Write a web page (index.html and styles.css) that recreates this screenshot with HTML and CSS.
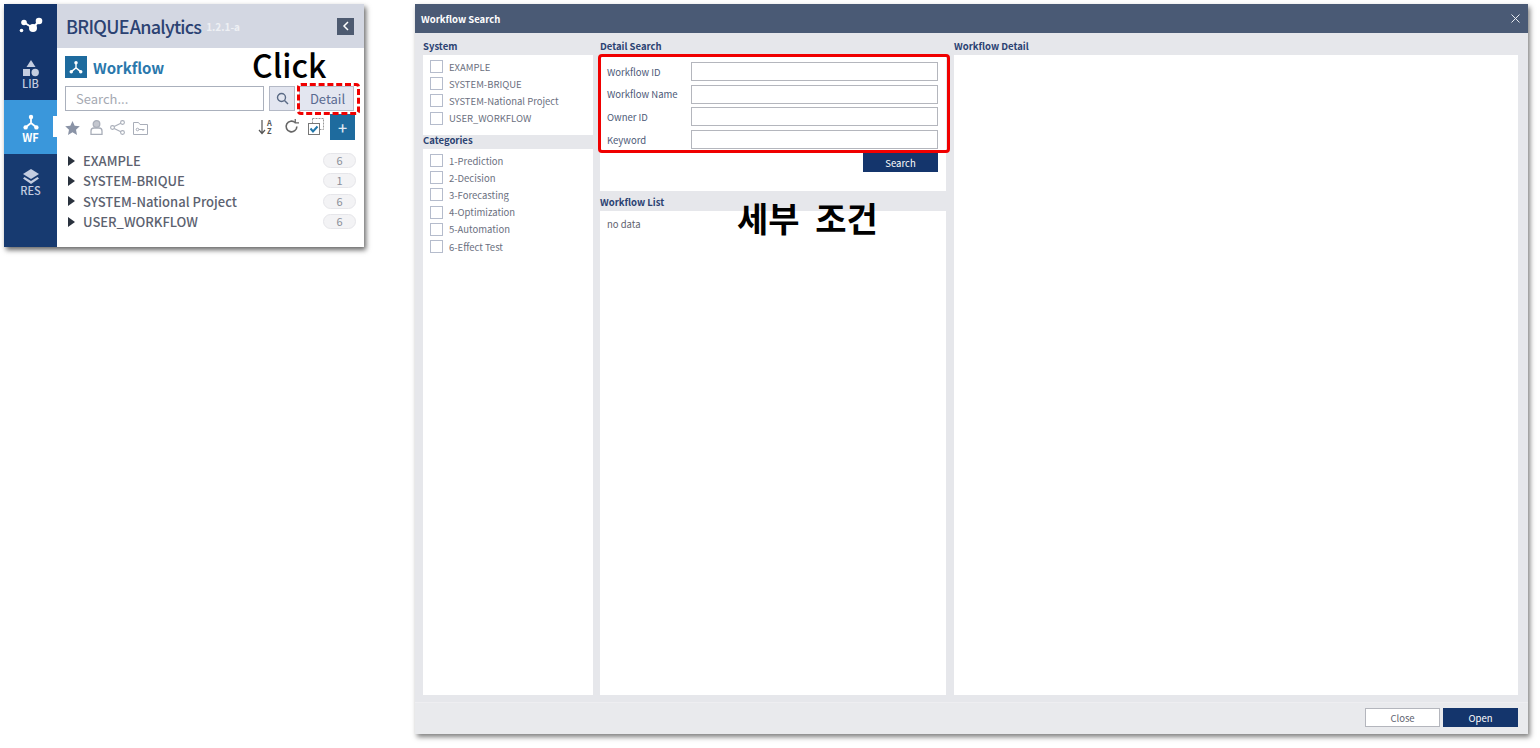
FILE: index.html
```html
<!DOCTYPE html>
<html lang="en">
<head>
<meta charset="utf-8">
<title>Workflow Search</title>
<link rel="stylesheet" href="styles.css">
</head>
<body>
<section class="panel">
  <nav class="rail">
    <div class="rail-logo">
      <svg width="24" height="18" viewBox="0 0 24 18"><g fill="#fff"><circle cx="5" cy="5.500" r="2.800"/><circle cx="14" cy="11" r="4"/><circle cx="20" cy="4" r="3.300"/><circle cx="2.500" cy="13.500" r="1.800"/></g><path d="M5 5.500l9 5.500 6-7" stroke="#fff" stroke-width="2" fill="none"/></svg>
    </div>
    <div class="rail-item rail-lib">
      <svg width="16" height="17" viewBox="0 0 16 17" fill="#c4cde0"><path d="M8 0l4.500 7h-9z"/><rect x="0" y="9" width="7" height="7"/><circle cx="12.200" cy="12.500" r="3.700"/></svg>
      <span>LIB</span>
    </div>
    <div class="rail-item rail-wf">
      <svg width="16" height="16" viewBox="0 0 16 16" fill="none" stroke="#fff" stroke-width="1.800"><path d="M8 4v5M8 9l-5 4M8 9l5 4"/><circle cx="8" cy="3" r="2.200" fill="#fff" stroke="none"/><circle cx="2.600" cy="13.400" r="2.200" fill="#fff" stroke="none"/><circle cx="13.400" cy="13.400" r="2.200" fill="#fff" stroke="none"/></svg>
      <span>WF</span>
    </div>
    <div class="rail-item rail-res">
      <svg width="16" height="15" viewBox="0 0 16 15" fill="#c4cde0"><path d="M8 0l8 5-8 5-8-5z"/><path d="M1.500 8l6.500 4 6.500-4 1.500 1.500L8 15 0 9.500z"/></svg>
      <span>RES</span>
    </div>
  </nav>
  <div class="side">
    <header class="side-head">
      <h1 class="brand"><span class="brand-a">BRIQUE</span><span class="brand-b">Analytics</span></h1>
      <span class="version">1.2.1-a</span>
      <button class="collapse" type="button"><svg width="8" height="10" viewBox="0 0 8 10" fill="none" stroke="#fff" stroke-width="1.500"><path d="M6 1L2 5l4 4"/></svg></button>
    </header>
    <div class="side-body">
      <div class="wf-title">
        <span class="wf-badge"><svg width="14" height="14" viewBox="0 0 16 16" fill="none" stroke="#fff" stroke-width="1.600"><path d="M8 4v5M8 9l-5 4M8 9l5 4"/><circle cx="8" cy="3" r="2" fill="#fff" stroke="none"/><circle cx="2.600" cy="13.400" r="2" fill="#fff" stroke="none"/><circle cx="13.400" cy="13.400" r="2" fill="#fff" stroke="none"/></svg></span>
        <h2>Workflow</h2>
      </div>
      <div class="search-row">
        <div class="search-input">Search...</div>
        <button class="search-btn" type="button"><svg width="13" height="13" viewBox="0 0 13 13" fill="none" stroke="#5a6a85" stroke-width="1.400"><circle cx="5.500" cy="5.500" r="4"/><path d="M8.500 8.500l3.500 3.500"/></svg></button>
        <button class="detail-btn" type="button">Detail</button>
      </div>
      <div class="tools">
        <div class="tools-left">
          <svg width="15" height="14" viewBox="0 0 15 14" fill="#8a93a6"><path d="M7.500 0l2.200 4.700 5.100.6-3.800 3.500 1 5.100-4.500-2.600L3 13.900l1-5.100L.2 5.300l5.100-.6z"/></svg>
          <svg class="tool-user" width="13" height="15" viewBox="0 0 13 15" fill="none" stroke="#a9aeb9" stroke-width="1.300"><circle cx="6.500" cy="4" r="3.300" fill="#c4c7cf"/><path d="M1 14.300V11a3 3 0 0 1 3-3h5a3 3 0 0 1 3 3v3.300z"/></svg>
          <svg width="15" height="15" viewBox="0 0 15 15" fill="none" stroke="#a9aeb9" stroke-width="1.100"><circle cx="12.500" cy="2.500" r="1.900"/><circle cx="2.500" cy="7.500" r="1.900"/><circle cx="12.500" cy="12.500" r="1.900"/><path d="M4.200 6.600l6.600-3.300M4.200 8.400l6.600 3.300"/></svg>
          <svg width="15" height="14" viewBox="0 0 15 14" fill="none" stroke="#a9aeb9" stroke-width="1"><path d="M.5 13.500V1.500h5l1.500 2h7.500v10z"/><circle cx="4.500" cy="8.500" r="1.300"/><path d="M6 8.500h5.500M10 8.500v1.500"/></svg>
        </div>
        <div class="tools-right">
          <span class="sort"><svg width="8" height="16" viewBox="0 0 8 16" fill="none" stroke="#555" stroke-width="1.200"><path d="M4 1v13M1 11l3 3.500L7 11"/></svg><span class="sort-az">A<br>Z</span></span>
          <svg class="tool-refresh" width="15" height="15" viewBox="0 0 14 14" fill="none" stroke="#666" stroke-width="1.500"><path d="M12 7a5 5 0 1 1-1.600-3.700"/><path d="M10.500 0v3.700H14" stroke-width="1.200"/></svg>
          <svg class="tool-check" width="16" height="17" viewBox="0 0 16 17" fill="none"><rect x="4.500" y="0.500" width="11" height="11" stroke="#999" stroke-dasharray="2 1"/><rect x="0.500" y="5.500" width="11" height="11" fill="#fff" stroke="#777"/><path d="M2.500 10.500l2.500 3 4.500-5" stroke="#2277aa" stroke-width="2"/></svg>
          <button class="add-btn" type="button">+</button>
        </div>
      </div>
      <ul class="tree">
        <li class="tree-row"><i class="caret"></i><span class="tree-name">EXAMPLE</span><span class="count">6</span></li>
        <li class="tree-row"><i class="caret"></i><span class="tree-name">SYSTEM-BRIQUE</span><span class="count">1</span></li>
        <li class="tree-row"><i class="caret"></i><span class="tree-name">SYSTEM-National Project</span><span class="count">6</span></li>
        <li class="tree-row"><i class="caret"></i><span class="tree-name">USER_WORKFLOW</span><span class="count">6</span></li>
      </ul>
    </div>
  </div>
</section>

<div class="click-note">Click</div>
<div class="click-ring"></div>

<section class="modal">
  <header class="modal-head">
    <span>Workflow Search</span>
    <svg width="9" height="9" viewBox="0 0 9 9" stroke="#e8ebf0" stroke-width="1" fill="none"><path d="M.5.500l8 8M8.500.500l-8 8"/></svg>
  </header>
  <div class="modal-body">
    <div class="col col-filter">
      <h3 class="label">System</h3>
      <div class="box box-system">
        <label class="check"><i></i>EXAMPLE</label>
        <label class="check"><i></i>SYSTEM-BRIQUE</label>
        <label class="check"><i></i>SYSTEM-National Project</label>
        <label class="check"><i></i>USER_WORKFLOW</label>
      </div>
      <h3 class="label">Categories</h3>
      <div class="box box-cat">
        <label class="check"><i></i>1-Prediction</label>
        <label class="check"><i></i>2-Decision</label>
        <label class="check"><i></i>3-Forecasting</label>
        <label class="check"><i></i>4-Optimization</label>
        <label class="check"><i></i>5-Automation</label>
        <label class="check"><i></i>6-Effect Test</label>
      </div>
    </div>
    <div class="col col-mid">
      <h3 class="label">Detail Search</h3>
      <div class="box box-detail">
        <div class="field"><span>Workflow ID</span><div class="input"></div></div>
        <div class="field"><span>Workflow Name</span><div class="input"></div></div>
        <div class="field"><span>Owner ID</span><div class="input"></div></div>
        <div class="field"><span>Keyword</span><div class="input"></div></div>
        <button class="primary search-go" type="button">Search</button>
      </div>
      <h3 class="label label-list">Workflow List</h3>
      <div class="box box-list">no data</div>
    </div>
    <div class="col col-right">
      <h3 class="label">Workflow Detail</h3>
      <div class="box box-right"></div>
    </div>
  </div>
  <footer class="modal-foot">
    <button class="ghost" type="button">Close</button>
    <button class="primary" type="button">Open</button>
  </footer>
</section>

<div class="detail-ring"></div>
<div class="ko-note">세부 조건</div>
</body>
</html>
```

FILE: styles.css
```css
* { box-sizing: border-box; }
html, body { margin: 0; height: 100%; }
body {
  position: relative;
  width: 1540px;
  height: 748px;
  overflow: hidden;
  background: #fff;
  font-family: "Noto Sans CJK KR", "Noto Sans", sans-serif;
}
h1, h2, h3, ul { margin: 0; padding: 0; }
button { font-family: inherit; padding: 0; cursor: pointer; }

/* left window */
.panel {
  position: absolute;
  left: 4px;
  top: 4px;
  width: 360px;
  height: 243px;
  display: flex;
  background: #fff;
  box-shadow: 2px 3px 5px rgba(0,0,0,.6);
}
.rail { width: 53px; background: #14356c; display: flex; flex-direction: column; }
.rail-logo { height: 44px; display: flex; align-items: center; justify-content: center; }
.rail-item {
  display: flex;
  flex-direction: column;
  align-items: center;
  font-size: 11px;
  font-weight: 500;
  line-height: 13px;
  color: #c4cde0;
}
.rail-lib { height: 52px; padding-top: 12px; gap: 0; }
.rail-wf { height: 54px; padding-top: 14px; gap: 1px; background: #3a97db; color: #fff; font-weight: 700; position: relative; }
.rail-wf::after {
  content: "";
  position: absolute;
  right: 0;
  top: 16px;
  width: 4px;
  height: 21px;
  background: #fff;
}
.rail-res { padding-top: 15px; gap: 0; flex: 1; background: #173a70; }
.side { flex: 1; display: flex; flex-direction: column; min-width: 0; }
.side-head {
  height: 44px;
  background: #d3d7e2;
  display: flex;
  align-items: center;
  padding: 0 10px 0 9px;
}
.brand { font-size: 18px; line-height: 24px; font-weight: 500; color: #2b4272; white-space: nowrap; }
.brand-a { letter-spacing: -.7px; }
.brand-b { margin-left: 1px; letter-spacing: -.75px; }
.version { margin-left: 5px; font-size: 10px; font-weight: 700; color: #eef0f4; }
.collapse {
  margin-left: auto;
  width: 17px;
  height: 17px;
  background: #4d5a70;
  border: 0;
  display: flex;
  align-items: center;
  justify-content: center;
}
.side-body { flex: 1; padding: 8px 8px 0 8px; display: flex; flex-direction: column; }
.wf-title { display: flex; align-items: center; gap: 6px; height: 22px; }
.wf-badge {
  width: 22px;
  height: 22px;
  background: #1e6b9e;
  display: flex;
  align-items: center;
  justify-content: center;
}
.wf-title h2 { font-size: 15px; line-height: 22px; padding-top: 1px; font-weight: 700; color: #2a78ac; }
.search-row { display: flex; margin-top: 8px; height: 26px; }
.search-input {
  width: 199px;
  height: 25px;
  border: 1px solid #aab0bc;
  font-size: 13px;
  line-height: 23px;
  padding-left: 10px;
  color: #a5a9b2;
}
.search-btn {
  width: 26px;
  height: 25px;
  margin-left: 5px;
  background: #e3e6f0;
  border: 1px solid #b4b9c6;
  display: flex;
  align-items: center;
  justify-content: center;
}
.detail-btn {
  width: 55px;
  height: 25px;
  margin-left: 4px;
  padding-left: 2px;
  background: #e3e6f0;
  border: 1px solid #b9bdca;
  font-size: 13px;
  color: #5a6a90;
}
.tools { display: flex; justify-content: space-between; height: 26px; margin-top: 2px; }
.tools-left { display: flex; align-items: center; gap: 8px; padding-top: 1px; }
.tool-user { margin: 0 -1px 0 2px; }
.tools-right { display: flex; align-items: flex-start; margin-right: 1px; }
.sort { display: flex; margin-top: 5px; width: 15px; gap: 1px; }
.sort-az { font-size: 7.500px; font-weight: 700; line-height: 8px; color: #555; }
.tool-refresh { margin: 5px 0 0 11px; }
.tool-check { margin: 4px 0 0 9px; }
.add-btn {
  width: 25px;
  height: 26px;
  margin-left: 6px;
  background: #1e6b9e;
  border: 0;
  color: #dfe9f2;
  font-size: 16px;
  font-weight: 500;
  line-height: 24px;
}
.tree { list-style: none; margin-top: 10.400px; }
.tree-row { display: flex; align-items: center; height: 20.400px; }
.caret {
  width: 0;
  height: 0;
  margin-left: 3px;
  border-left: 7px solid #2a323e;
  border-top: 5.500px solid transparent;
  border-bottom: 5.500px solid transparent;
}
.tree-name { margin-left: 8px; font-size: 13px; font-weight: 500; color: #5c6270; white-space: nowrap; }
.count {
  margin-left: auto;
  width: 33px;
  height: 15px;
  border-radius: 8px;
  background: #f3f3f5;
  border: 1px solid #e6e6ea;
  text-align: center;
  font-size: 11px;
  line-height: 13px;
  color: #8a8e98;
}

/* annotations */
.click-note {
  position: absolute;
  left: 252px;
  top: 44px;
  font-size: 32px;
  line-height: 40px;
  font-weight: 500;
  color: #000;
}
.click-ring {
  position: absolute;
  left: 297px;
  top: 83px;
  width: 63px;
  height: 32px;
  border: 3px dashed #f00000;
  border-radius: 4px;
}
.detail-ring {
  position: absolute;
  left: 598px;
  top: 54px;
  width: 352px;
  height: 99px;
  border: 3px solid #f00000;
  border-radius: 4px;
}
.ko-note {
  position: absolute;
  left: 737px;
  top: 196px;
  font-size: 34px;
  line-height: 44px;
  font-weight: 700;
  word-spacing: 8px;
  color: #000;
  white-space: nowrap;
}

/* modal */
.modal {
  position: absolute;
  left: 415px;
  top: 4px;
  width: 1113px;
  height: 730px;
  display: flex;
  flex-direction: column;
  background: #e6e7eb;
  box-shadow: 2px 3px 5px rgba(0,0,0,.5);
}
.modal-head {
  height: 29px;
  background: #4a5a75;
  color: #fff;
  display: flex;
  align-items: center;
  justify-content: space-between;
  padding: 0 8px 0 6px;
  font-size: 9.500px;
  font-weight: 700;
}
.modal-body {
  height: 670px;
  padding: 0 10px 7px 8px;
  display: grid;
  grid-template-columns: 170px 346px 565px;
  column-gap: 7px;
  border-bottom: 1px solid #eeeef1;
}
.col { display: flex; flex-direction: column; min-height: 0; }
.col-right { margin-left: 1px; }
.label {
  height: 22px;
  padding-top: 5.500px;
  font-size: 9.500px;
  line-height: 15px;
  font-weight: 700;
  color: #2b4272;
  flex: none;
}
.box { background: #fff; }
.box-system { height: 80px; padding-top: 3px; flex: none; }
.box-system + .label { height: 14px; padding-top: 0; line-height: 11px; }
.box-cat { flex: 1; padding-top: 3px; }
.check {
  display: flex;
  align-items: center;
  height: 17.200px;
  padding-left: 7px;
  font-size: 9.500px;
  color: #6b7080;
}
.check i {
  width: 13px;
  height: 13px;
  margin-right: 6px;
  background: #fff;
  border: 1px solid #b5bccc;
  flex: none;
}
.box-detail { height: 136px; padding: 5.500px 8px 0 7px; flex: none; display: flex; flex-direction: column; }
.field { display: flex; align-items: center; height: 22.600px; flex: none; }
.field span { width: 84px; font-size: 9.500px; color: #4d5a78; }
.input { width: 247px; height: 19px; background: #fff; border: 1px solid #b4b6bd; }
.primary, .ghost { width: 75px; height: 19px; font-size: 9.500px; border: 0; }
.primary { background: #14356c; color: #fff; }
.ghost { background: #fff; border: 1px solid #b4b6bd; color: #5f6470; }
.search-go { align-self: flex-end; margin-top: 2.500px; }
.label-list { height: 20px; padding-top: 4px; }
.box-list { flex: 1; padding: 6px 7px; font-size: 9.500px; color: #5f6470; }
.box-right { flex: 1; }
.modal-foot {
  flex: 1;
  display: flex;
  justify-content: flex-end;
  align-items: flex-start;
  gap: 3px;
  padding: 5px 10px 0 0;
  background: #e9eaed;
}
```
